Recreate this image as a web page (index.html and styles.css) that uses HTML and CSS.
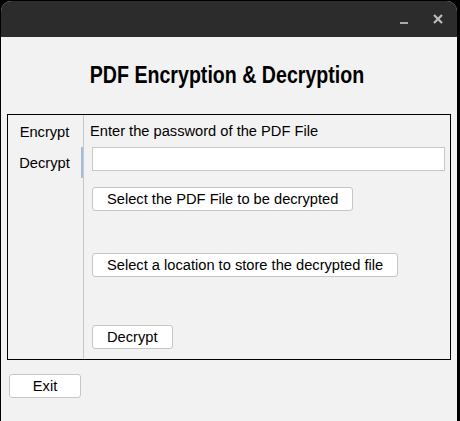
FILE: index.html
```html
<!DOCTYPE html>
<html>
<head>
<meta charset="utf-8">
<link rel="stylesheet" href="styles.css">
</head>
<body>
<div class="window">
  <div class="titlebar">
    <span class="ctl ctl-min">
      <svg width="9" height="10" viewBox="0 0 9 10"><rect x="0" y="7" width="8" height="2" fill="#a9a9a9"/></svg>
    </span>
    <span class="ctl ctl-close">
      <svg width="10" height="10" viewBox="0 0 10 10"><path d="M1 1 L9 9 M9 1 L1 9" stroke="#bdbdbd" stroke-width="2.2" fill="none"/></svg>
    </span>
  </div>
  <div class="body">
    <h1 class="title">PDF Encryption &amp; Decryption</h1>
    <div class="panel">
      <div class="tabs">
        <div class="tab">Encrypt</div>
        <div class="tab active">Decrypt</div>
      </div>
      <div class="content">
        <div class="label">Enter the password of the PDF File</div>
        <input class="field" type="password">
        <div class="btn btn-1">Select the PDF File to be decrypted</div>
        <div class="btn btn-2">Select a location to store the decrypted file</div>
        <div class="btn btn-3">Decrypt</div>
      </div>
    </div>
    <div class="btn exit">Exit</div>
  </div>
</div>
</body>
</html>
```
FILE: styles.css
```css
html, body {
  margin: 0;
  padding: 0;
  background: #000;
  height: 421px;
  overflow: hidden;
}
.window {
  margin: 1px 0 0 1px;
  width: 456px;
  height: 420px;
  background: #f2f2f2;
  border-radius: 10px 10px 0 0;
  overflow: hidden;
  display: flex;
  flex-direction: column;
  font-family: "Liberation Sans", Arial, sans-serif;
  font-size: 14.67px;
  color: #000;
}
.titlebar {
  height: 36px;
  background: #2c2c2c;
  display: flex;
  justify-content: flex-end;
  align-items: flex-start;
  flex-shrink: 0;
}
.ctl {
  display: flex;
  margin-top: 13px;
}
.ctl-min {
  margin-right: 24px;
  margin-top: 14px;
}
.ctl-close {
  margin-right: 14px;
}
.body {
  flex: 1;
  display: flex;
  flex-direction: column;
}
.title {
  margin: 24px 0 25px 0;
  padding-right: 5px;
  font-family: "Liberation Sans Narrow", "Liberation Sans", Arial, sans-serif;
  font-size: 24.5px;
  font-weight: bold;
  line-height: 28px;
  text-align: center;
  transform: scaleX(0.8);
}
.panel {
  margin: 0 6px;
  border: 1px solid #000;
  display: flex;
}
.tabs {
  width: 75px;
  padding-top: 1px;
  border-right: 1px solid #c9c9c9;
  display: flex;
  flex-direction: column;
}
.tab {
  padding: 8px 0 7px 0;
  line-height: 16px;
  text-align: center;
  border-right: 2px solid transparent;
}
.tab.active {
  border-right-color: #a2bcdc;
}
.content {
  flex: 1;
  padding: 8px 0 10px 8px;
  display: flex;
  flex-direction: column;
  align-items: flex-start;
}
.label {
  line-height: 16px;
  margin-left: -2px;
}
.field {
  margin: 8px 0 0 0;
  width: 353px;
  height: 24px;
  box-sizing: border-box;
  border: 1px solid #c9c9c9;
  background: #fff;
  padding: 0 4px;
  outline: none;
}
.btn {
  box-sizing: border-box;
  height: 24px;
  line-height: 22px;
  padding: 0 14px;
  border: 1px solid #c6c6c6;
  border-radius: 3px;
  background: #fff;
  white-space: nowrap;
}
.btn-1 { margin-top: 16px; }
.btn-2 { margin-top: 42px; }
.btn-3 { margin-top: 48px; }
.exit {
  align-self: flex-start;
  margin: 14px 0 0 8px;
  width: 72px;
  padding: 0;
  text-align: center;
}
```
